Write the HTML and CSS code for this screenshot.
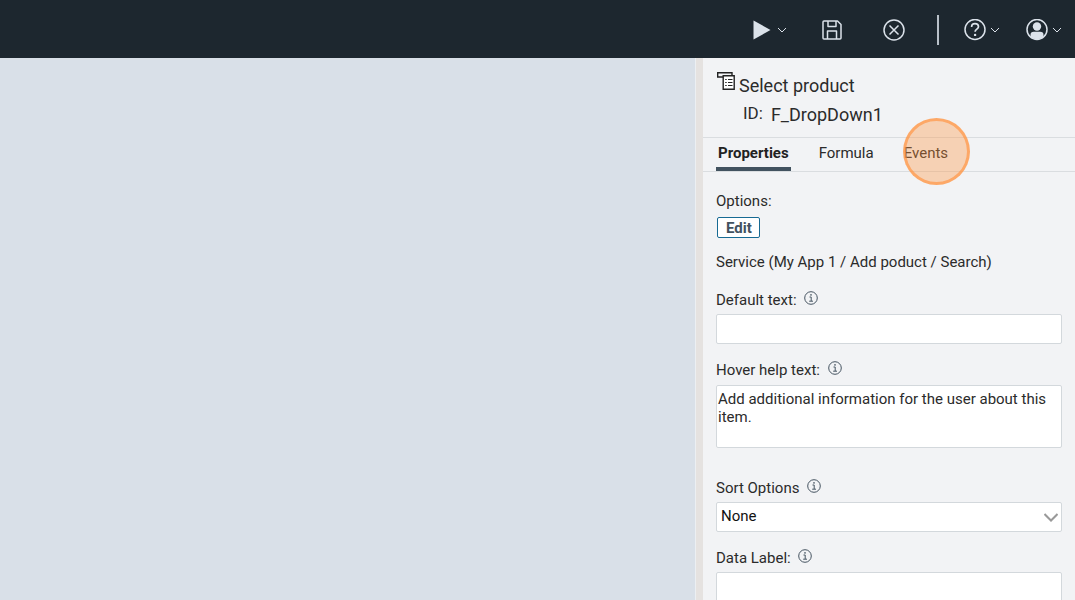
FILE: index.html
```html
<!DOCTYPE html>
<html lang="en">
<head>
  <meta charset="UTF-8">
  <title>App Designer</title>
  <link rel="stylesheet" href="styles.css">
</head>
<body>

  <svg class="symbols" width="0" height="0">
    <symbol id="chevron" viewBox="0 0 10 6">
      <path d="M1 1l4 4 4-4" fill="none" stroke="currentColor"/>
    </symbol>
    <symbol id="info" viewBox="0 0 14 14">
      <circle cx="7" cy="7" r="6.300" fill="none" stroke="currentColor"/>
      <path d="M5.500 6h1.700v4M5.200 10.200h3.800" fill="none" stroke="currentColor"/>
      <circle cx="7" cy="3.900" r="0.800" fill="currentColor"/>
    </symbol>
  </svg>

  <header class="topbar">
    <button type="button" class="tool" aria-label="Run">
      <svg width="18" height="20" viewBox="0 0 18 20"><path d="M0.500 0.500v19L17.500 10z" fill="currentColor"/></svg>
      <svg class="chevron" width="10" height="6"><use href="#chevron"/></svg>
    </button>
    <button type="button" class="tool tool-save" aria-label="Save">
      <svg width="20" height="20" viewBox="0 0 20 20" fill="none" stroke="currentColor" stroke-width="1.5" stroke-linejoin="round">
        <path d="M2 1h13.500L19 4.500V18q0 1-1 1H2q-1 0-1-1V2q0-1 1-1z"/>
        <path d="M6 1v5.500h8V1M5.500 19v-8h9v8"/>
      </svg>
    </button>
    <button type="button" class="tool tool-close" aria-label="Close">
      <svg width="22" height="22" viewBox="0 0 22 22" fill="none" stroke="currentColor" stroke-width="1.5">
        <circle cx="11" cy="11" r="10"/>
        <path d="M6.500 6.500l9 9M15.500 6.500l-9 9"/>
      </svg>
    </button>
    <span class="divider"></span>
    <button type="button" class="tool tool-help" aria-label="Help">
      <svg width="22" height="22" viewBox="0 0 22 22" fill="none" stroke="currentColor" stroke-width="1.5">
        <circle cx="11" cy="10.500" r="10"/>
        <path d="M7.600 8C7.600 5.800 9 4.700 11 4.700s3.500 1.200 3.500 3c0 2.400-3.400 2.400-3.400 5" stroke-width="1.700"/>
        <circle cx="11.100" cy="15.900" r="1.200" fill="currentColor" stroke="none"/>
      </svg>
      <svg class="chevron" width="10" height="6"><use href="#chevron"/></svg>
    </button>
    <button type="button" class="tool tool-user" aria-label="Account">
      <svg width="22" height="22" viewBox="0 0 22 22">
        <circle cx="11" cy="10.500" r="10" fill="none" stroke="currentColor" stroke-width="1.5"/>
        <circle cx="11" cy="7.500" r="4.200" fill="currentColor"/>
        <path d="M4.500 18V16q0-3.300 3.300-3.300h6.400q3.300 0 3.300 3.300v2q-6.500 4.500-13 0z" fill="currentColor"/>
      </svg>
      <svg class="chevron" width="10" height="6"><use href="#chevron"/></svg>
    </button>
  </header>

  <div class="workspace">
    <main class="canvas"></main>

    <aside class="panel">
      <div class="item-head">
        <svg class="item-icon" width="18" height="20" viewBox="0 0 18 20" fill="none" stroke="#222">
          <path d="M6 6H0.700V1.700h14.300v2.500" stroke-width="1.400"/>
          <path d="M6.200 4.700h11v13.600h-11z" fill="#fff" stroke-width="1.400"/>
          <path d="M8.200 8.500h1.500M11 8.500h4.500M8.200 11.500h1.500M11 11.500h4.500M8.200 14.500h1.500M11 14.500h4.500" stroke-width="1.200"/>
        </svg>
        <div class="item-title">Select product</div>
        <div class="item-id"><span class="id-label">ID:</span><span>F_DropDown1</span></div>
      </div>

      <nav class="tabs">
        <a href="#properties" class="tab active">Properties</a>
        <a href="#formula" class="tab">Formula</a>
        <a href="#events" class="tab">Events<span class="click-marker"></span></a>
      </nav>

      <form class="properties" id="properties">
        <div class="options">
          <label for="edit">Options:</label>
          <button type="button" class="edit" id="edit">Edit</button>
          <p class="service">Service (My App 1 / Add poduct / Search)</p>
        </div>

        <div class="field">
          <label for="defaultText">Default text: <svg class="info" width="14" height="14"><use href="#info"/></svg></label>
          <input type="text" id="defaultText">
        </div>

        <div class="field field-help">
          <label for="helpText">Hover help text: <svg class="info" width="14" height="14"><use href="#info"/></svg></label>
          <textarea id="helpText">Add additional information for the user about this item.</textarea>
        </div>

        <div class="field">
          <label for="sort">Sort Options <svg class="info" width="14" height="14"><use href="#info"/></svg></label>
          <div class="select">
            <select id="sort">
              <option>None</option>
              <option>Ascending</option>
              <option>Descending</option>
            </select>
            <svg class="select-arrow" width="14" height="9" viewBox="0 0 14 9"><path d="M0.500 1l6.500 6.500 6.500-6.500" fill="none" stroke="#999" stroke-width="2"/></svg>
          </div>
        </div>

        <div class="field">
          <label for="dataLabel">Data Label: <svg class="info" width="14" height="14"><use href="#info"/></svg></label>
          <input type="text" id="dataLabel">
        </div>
      </form>
    </aside>
  </div>

</body>
</html>
```

FILE: styles.css
```css
* {
  box-sizing: border-box;
}

body {
  margin: 0;
  height: 100vh;
  display: flex;
  flex-direction: column;
  overflow: hidden;
  font-family: Roboto, sans-serif;
  font-size: 15px;
  line-height: 20px;
  color: #2b2b2b;
}

button, input, textarea, select {
  font: inherit;
  color: inherit;
}

.symbols {
  position: absolute;
}

/* top bar */
.topbar {
  display: flex;
  align-items: center;
  justify-content: flex-end;
  flex-shrink: 0;
  height: 58px;
  padding: 2px 13px 0 0;
  background-color: #1d272f;
  color: #dbe2ea;
}

.tool {
  display: flex;
  align-items: center;
  gap: 4px;
  padding: 0;
  border: 0;
  background: none;
}

.tool:first-child {
  gap: 6px;
}

.tool-save {
  margin-left: 35px;
}

.tool-close {
  margin-left: 41px;
}

.divider {
  width: 2px;
  height: 30px;
  margin-left: 32px;
  background-color: #b8c0c8;
}

.tool-help {
  margin-left: 25px;
}

.tool-user {
  margin-left: 26px;
}

/* workspace */
.workspace {
  display: flex;
  flex: 1;
  min-height: 0;
}

.canvas {
  flex: 1;
  background-color: #d9e0e8;
  border-right: 1px solid #eceff2;
}

.panel {
  width: 379px;
  overflow: hidden;
  background-color: #f2f3f5;
  border-left: 7px solid #e5e2e0;
}

.item-head {
  display: grid;
  grid-template-columns: 18px 1fr;
  column-gap: 4px;
  padding: 13px 14px 8px;
  font-size: 18px;
  line-height: 29px;
}

.item-id {
  grid-column: 2;
  display: flex;
  gap: 8px;
  padding-left: 4px;
}

.id-label {
  font-size: 17px;
  line-height: 27px;
}

.tabs {
  display: flex;
  gap: 26px;
  padding: 0 13px;
  border-top: 1px solid #dadde0;
  border-bottom: 1px solid #dadde0;
}

.tab {
  position: relative;
  height: 33px;
  padding: 5px 2px 0;
  color: inherit;
  text-decoration: none;
}

.tab.active {
  font-weight: bold;
  color: #222;
  border-bottom: 4px solid #42525f;
}

.click-marker {
  position: absolute;
  top: -20px;
  left: 1px;
  width: 67px;
  height: 67px;
  border: 3px solid rgba(255, 150, 70, 0.7);
  border-radius: 50%;
  background-color: rgba(255, 145, 60, 0.35);
}

/* properties form */
.properties {
  padding: 19px 13px;
}

.properties label {
  display: block;
}

.edit {
  display: block;
  margin: 6px 1px 14px;
  padding: 1px 7px 0 8px;
  border: 1px solid #176a93;
  border-radius: 2px;
  background-color: #fff;
  color: #42525f;
  font-weight: bold;
  line-height: 18px;
}

.service {
  margin: 0 0 18px;
}

.field {
  margin-bottom: 16px;
}

.field-help {
  margin-bottom: 30px;
}

.info {
  margin-left: 4px;
  vertical-align: 0;
  color: #465461;
}

.field input,
.field textarea,
.field select {
  display: block;
  width: 100%;
  height: 30px;
  margin-top: 4px;
  padding: 0 4px;
  border: 1px solid #d3d8dc;
  border-radius: 2px;
  background-color: #fff;
}

.field textarea {
  height: 63px;
  margin-top: 5px;
  padding: 4px 1px;
  line-height: 18px;
  resize: none;
}

.select {
  position: relative;
}

.field select {
  appearance: none;
  padding-bottom: 2px;
  color: #111;
}

.select-arrow {
  position: absolute;
  top: 11px;
  right: 4px;
  pointer-events: none;
}
```
